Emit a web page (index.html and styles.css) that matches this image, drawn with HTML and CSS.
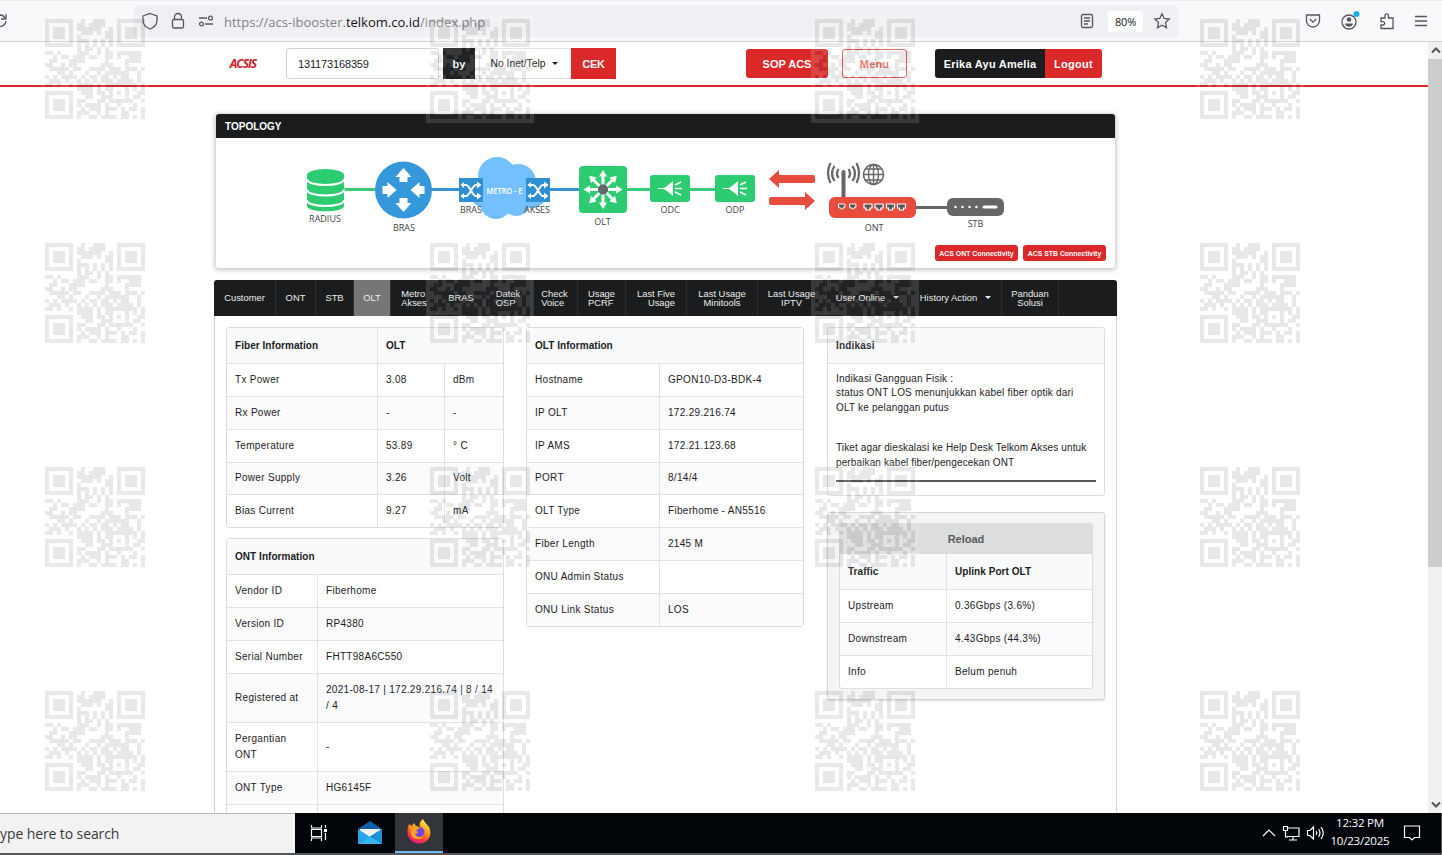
FILE: index.html
```html
<!DOCTYPE html>
<html lang="id">
<head>
    <meta charset="UTF-8">
    <title>ACSIS</title>
    <link rel="stylesheet" href="styles.css">
</head>
<body>
    <div class="browser">
        <svg class="reload" width="8" height="16" viewBox="0 0 8 16"><path d="M-1 13.5C3 14 6 11 5.800 8M6 1v5H1M5 5C4 3 2 2 0 2" /></svg>
        <div class="urlbar">
            <svg width="18" height="18" viewBox="0 0 18 18"><path d="M9 1.500L16 4v4.500C16 12.500 13 15.500 9 17 5 15.500 2 12.500 2 8.500V4z" /></svg>
            <svg width="18" height="18" viewBox="0 0 18 18"><rect x="3.500" y="7.500" width="11" height="8.500" rx="1.500" /><path d="M5.500 7.500V5a3.500 3.500 0 0 1 7 0v2.500" /></svg>
            <svg width="18" height="18" viewBox="0 0 18 18"><path d="M2 6h8M8 12h8" /><circle cx="13.500" cy="6" r="1.900" /><circle cx="4.500" cy="12" r="1.900" /></svg>
            <div class="url">https://acs-ibooster.<b>telkom.co.id</b>/index.php</div>
            <svg class="reader" width="16" height="18" viewBox="0 0 16 18"><rect x="2.500" y="2.500" width="11" height="13" rx="1.500" /><path d="M5 6h6M5 9h6M5 12h4" /></svg>
            <div class="zoom">80%</div>
            <svg width="18" height="18" viewBox="0 0 18 18"><path d="M9 1.800l2.200 4.700 5 .6-3.700 3.500 1 5.100L9 13.200l-4.500 2.500 1-5.100L1.800 7.100l5-.6z" /></svg>
        </div>
        <div class="tools">
            <svg width="18" height="18" viewBox="0 0 18 18"><path d="M2.500 3h13v5.500a6.500 6.500 0 0 1-13 0zM5.800 7L9 10.200 12.200 7" /></svg>
            <svg width="22" height="22" viewBox="0 0 22 22"><circle cx="10" cy="12" r="7" /><circle cx="10" cy="9.500" r="2.300" class="solid" /><path class="solid" d="M6 13.500h8c0 2-2 3.200-4 3.200s-4-1.200-4-3.200z" /><circle cx="17.500" cy="4" r="3" class="dot" /></svg>
            <svg width="18" height="18" viewBox="0 0 18 18"><path d="M3 6h4V3.500a1.700 1.700 0 0 1 3.400 0V6H15v10.500H3V13h2a1.700 1.700 0 0 0 0-3.400H3z" /></svg>
            <svg width="16" height="16" viewBox="0 0 16 16"><path d="M2 3.500h12M2 8h12M2 12.500h12" /></svg>
        </div>
    </div>

    <div class="viewport">
        <div class="page">
            <div class="header">
                <div class="logo">ACSIS</div>
                <div class="search-input">131173168359</div>
                <div class="by">by</div>
                <div class="dropdown">No Inet/Telp <i class="caret"></i></div>
                <div class="cek">CEK</div>
                <div class="sop">SOP ACS</div>
                <div class="menu-btn">Menu</div>
                <div class="user">Erika Ayu Amelia</div>
                <div class="logout">Logout</div>
            </div>

            <div class="topology">
                <div class="topology-title">TOPOLOGY</div>
                <svg class="diagram" width="899" height="105" viewBox="216 138 899 105">
                    <defs>
                        <g id="switch">
                            <rect width="24" height="24" fill="#2f8fd3" />
                            <path d="M3 7h4c4 0 6 11 10 11h3M3 18h4c4 0 6-11 10-11h3" fill="none" stroke="#fff" stroke-width="2" />
                            <path d="M18 3.500l4.500 3.500-4.500 3.500zM18 14.500l4.500 3.500-4.500 3.500zM5 4L1.500 7 5 10zM5 15l-3.500 3 3.500 3z" fill="#fff" />
                        </g>
                        <path id="arrow" d="M-4-8v-5h-4L0-22l8 9H4v5z" />
                        <path id="ray" d="M-1.500-5v-8H-4L0-19.500l4 6.500H1.500v8z" />
                        <g id="splitter">
                            <rect width="40" height="27" rx="3" fill="#2ecc71" />
                            <path d="M8 13h6l3-2 6-5v15l-6-5-3-2H8z" fill="#fff" />
                            <path d="M25 10l6-3M25 13.500h7M25 17l6 3" stroke="#fff" stroke-width="1.500" />
                        </g>
                        <path id="port" d="M0 0h8v4H6v2H2V4H0z" fill="#555" stroke="#fff" stroke-width="1.200" />
                    </defs>
                    <path d="M343 189.500h33" stroke="#3cc878" stroke-width="3" />
                    <path d="M431 189.500h150" stroke="#3793d6" stroke-width="3" />
                    <path d="M626 189.500h90" stroke="#3cc878" stroke-width="3" />

                    <path d="M307 175v31c0 7 37 7 37 0v-31z" fill="#2ecc71" />
                    <ellipse cx="325.500" cy="175" rx="18.500" ry="6" fill="#2ecc71" />
                    <path d="M307 179c0 8 37 8 37 0M307 189.500c0 8 37 8 37 0M307 200c0 8 37 8 37 0" fill="none" stroke="#fff" stroke-width="2" />
                    <text x="325" y="222">RADIUS</text>

                    <circle cx="403.500" cy="190" r="28.500" fill="#3498db" />
                    <g fill="#fff">
                        <use href="#arrow" transform="translate(403.500 190)" />
                        <use href="#arrow" transform="translate(403.500 190) rotate(180)" />
                        <use href="#arrow" transform="translate(403.500 190) rotate(90) translate(0 29)" />
                        <use href="#arrow" transform="translate(403.500 190) rotate(-90) translate(0 29)" />
                    </g>
                    <text x="404" y="231">BRAS</text>

                    <g fill="#74bffd">
                        <circle cx="497" cy="176" r="19" />
                        <circle cx="518" cy="182" r="18" />
                        <circle cx="485" cy="194" r="14" />
                        <circle cx="496" cy="203" r="16" />
                        <circle cx="516" cy="202" r="14" />
                        <circle cx="532" cy="194" r="14" />
                    </g>
                    <use href="#switch" x="459" y="178" />
                    <use href="#switch" x="526" y="178" />
                    <text x="504.500" y="194" class="cloud-text" textLength="36" lengthAdjust="spacingAndGlyphs">METRO - E</text>
                    <text x="471" y="213">BRAS</text>
                    <text x="537" y="213">AKSES</text>

                    <rect x="579" y="166" width="48" height="47" rx="4" fill="#2ecc71" />
                    <g fill="#fff" transform="translate(603 189.500)">
                        <use href="#ray" /><use href="#ray" transform="rotate(45)" />
                        <use href="#ray" transform="rotate(90)" /><use href="#ray" transform="rotate(135)" />
                        <use href="#ray" transform="rotate(180)" /><use href="#ray" transform="rotate(225)" />
                        <use href="#ray" transform="rotate(270)" /><use href="#ray" transform="rotate(315)" />
                    </g>
                    <circle cx="603" cy="189.500" r="5" fill="#666" />
                    <text x="602.500" y="225">OLT</text>

                    <use href="#splitter" x="650" y="175" />
                    <text x="670" y="213">ODC</text>
                    <use href="#splitter" x="715" y="175" />
                    <text x="735" y="213">ODP</text>

                    <path d="M769 179l10-9v5h34q2 0 2 2v4q0 2-2 2h-34v5zM815 201l-10-9v5h-34q-2 0-2 2v4q0 2 2 2h34v5z" fill="#e74c3c" />

                    <path d="M843.500 198v-26" stroke="#666" stroke-width="4" stroke-linecap="round" />
                    <g fill="none" stroke="#666" stroke-width="2.200">
                        <path d="M838.500 169q-3 4.500 0 9M834.500 166q-5 7.500 0 15M830.500 163q-5 10 0 20M848.500 169q3 4.500 0 9M852.500 166q5 7.500 0 15M856.500 163q5 10 0 20" />
                        <g stroke-width="1.400">
                            <circle cx="873.500" cy="174.500" r="10" />
                            <ellipse cx="873.500" cy="174.500" rx="5" ry="10" />
                            <path d="M873.500 164.500v20M863.500 174.500h20M865.500 169h16M865.500 180h16" />
                        </g>
                    </g>
                    <path d="M915 207.500h33" stroke="#666" stroke-width="3" />
                    <rect x="829" y="197" width="87" height="21" rx="6" fill="#e74c3c" />
                    <use href="#port" transform="translate(838.500 204) scale(.8)" />
                    <use href="#port" transform="translate(849.500 204) scale(.8)" />
                    <use href="#port" x="864" y="204" />
                    <use href="#port" x="875" y="204" />
                    <use href="#port" x="886.500" y="204" />
                    <use href="#port" x="897.500" y="204" />
                    <text x="874" y="231">ONT</text>

                    <rect x="947" y="198" width="57" height="18" rx="6" fill="#666" />
                    <g fill="#fff">
                        <circle cx="955.500" cy="207" r="1.300" /><circle cx="962.500" cy="207" r="1.300" />
                        <circle cx="969.500" cy="207" r="1.300" /><circle cx="976.500" cy="207" r="1.300" />
                        <rect x="982.500" y="205.500" width="15" height="3" rx="1.500" />
                    </g>
                    <text x="975.500" y="227">STB</text>
                </svg>
                <div class="connectivity">
                    <span>ACS ONT Connectivity</span>
                    <span>ACS STB Connectivity</span>
                </div>
            </div>

            <div class="nav">
                <div>Customer</div>
                <div>ONT</div>
                <div>STB</div>
                <div class="active">OLT</div>
                <div class="left">Metro<br>Akses</div>
                <div>BRAS</div>
                <div class="left">Datek<br>OSP</div>
                <div class="left">Check<br>Voice</div>
                <div class="left">Usage<br>PCRF</div>
                <div class="right">Last Five<br>Usage</div>
                <div>Last Usage<br>Minitools</div>
                <div>Last Usage<br>IPTV</div>
                <div>User Online <i class="caret"></i></div>
                <div>History Action <i class="caret"></i></div>
                <div>Panduan<br>Solusi</div>
            </div>

            <div class="content">
                <div class="col">
                    <table>
                        <tr><th class="w-fiber">Fiber Information</th><th colspan="2">OLT</th></tr>
                        <tr><td>Tx Power</td><td class="w-value">3.08</td><td>dBm</td></tr>
                        <tr><td>Rx Power</td><td>-</td><td>-</td></tr>
                        <tr><td>Temperature</td><td>53.89</td><td>° C</td></tr>
                        <tr><td>Power Supply</td><td>3.26</td><td>Volt</td></tr>
                        <tr><td>Bias Current</td><td>9.27</td><td>mA</td></tr>
                    </table>
                    <table>
                        <tr><th colspan="2">ONT Information</th></tr>
                        <tr><td class="w-ont">Vendor ID</td><td>Fiberhome</td></tr>
                        <tr><td>Version ID</td><td>RP4380</td></tr>
                        <tr><td>Serial Number</td><td>FHTT98A6C550</td></tr>
                        <tr class="double"><td>Registered at</td><td>2021-08-17 | 172.29.216.74 | 8 / 14<br>/ 4</td></tr>
                        <tr class="double"><td>Pergantian<br>ONT</td><td>-</td></tr>
                        <tr><td>ONT Type</td><td>HG6145F</td></tr>
                        <tr><td></td><td></td></tr>
                    </table>
                </div>
                <div class="col">
                    <table>
                        <tr><th colspan="2">OLT Information</th></tr>
                        <tr><td class="w-olt">Hostname</td><td>GPON10-D3-BDK-4</td></tr>
                        <tr><td>IP OLT</td><td>172.29.216.74</td></tr>
                        <tr><td>IP AMS</td><td>172.21.123.68</td></tr>
                        <tr><td>PORT</td><td>8/14/4</td></tr>
                        <tr><td>OLT Type</td><td>Fiberhome - AN5516</td></tr>
                        <tr><td>Fiber Length</td><td>2145 M</td></tr>
                        <tr><td>ONU Admin Status</td><td></td></tr>
                        <tr><td>ONU Link Status</td><td>LOS</td></tr>
                    </table>
                </div>
                <div class="col">
                    <div class="indikasi">
                        <div class="indikasi-title">Indikasi</div>
                        <div class="indikasi-body">
                            <p>Indikasi Gangguan Fisik :<br>status ONT LOS menunjukkan kabel fiber optik dari<br>OLT ke pelanggan putus</p>
                            <p>Tiket agar dieskalasi ke Help Desk Telkom Akses untuk<br>perbaikan kabel fiber/pengecekan ONT</p>
                            <hr>
                        </div>
                    </div>
                    <div class="segment">
                        <div class="reload-btn">Reload</div>
                        <table>
                            <tr><th class="w-traffic">Traffic</th><th>Uplink Port OLT</th></tr>
                            <tr><td>Upstream</td><td>0.36Gbps (3.6%)</td></tr>
                            <tr><td>Downstream</td><td>4.43Gbps (44.3%)</td></tr>
                            <tr><td>Info</td><td>Belum penuh</td></tr>
                        </table>
                    </div>
                </div>
            </div>
        </div>
        <div class="scrollbar">
            <svg width="14" height="17" viewBox="0 0 14 17"><path d="M4 10.500l4-4 4 4" /></svg>
            <div class="thumb"></div>
            <svg width="14" height="17" viewBox="0 0 14 17"><path d="M4 6.500l4 4 4-4" /></svg>
        </div>
    </div>

    <div class="taskbar">
        <div class="task-search">ype here to search</div>
        <div class="task-icon">
            <svg width="18" height="18" viewBox="0 0 18 18"><path d="M1.500 1v3h10V1M1.500 17v-3h10v3M1.500 5.500h10v7h-10zM15.500 1v3M15.500 9v7" fill="none" stroke="#fff" stroke-width="1.200" /><rect x="14" y="5" width="3" height="3" fill="#fff" /></svg>
        </div>
        <div class="task-icon mail">
            <svg width="26" height="24" viewBox="0 0 26 24"><path d="M1 8L13 0l12 8v2H1z" fill="#0f5fae" /><path d="M3 8h20v8H3z" fill="#f4f4f4" /><path d="M1 8l12 8-12 7z" fill="#2aa7e8" /><path d="M25 8v15H1z" fill="#35b8f1" /><path d="M13 15.500L25 8v15z" fill="#1c8fdc" /></svg>
        </div>
        <div class="task-icon firefox">
            <svg width="26" height="26" viewBox="0 0 26 26">
                <defs>
                    <linearGradient id="flame" x1=".8" y1="0" x2=".3" y2="1"><stop offset="0" stop-color="#fff44f" /><stop offset=".45" stop-color="#ff980e" /><stop offset=".75" stop-color="#ff3647" /><stop offset="1" stop-color="#e31587" /></linearGradient>
                </defs>
                <path d="M3 5l2.500 2L8 4l2 3 4 1c-1-3 0-6 3-8 1 3 4 5 6 8 2 4 2 9-1 12.500S14 25 10 24 1.500 19 1.500 14 2 8 3 5z" fill="url(#flame)" />
                <circle cx="13.500" cy="13" r="5" fill="#7542e5" />
                <path d="M4 8c4-2 8-1 10 2-3 0-4 1-4 2 3 0 2 3-1 3 1 3 5 4 9 2-3 5-12 4-13-2z" fill="#ffa01e" />
            </svg>
        </div>
        <div class="tray">
            <svg width="14" height="18" viewBox="0 0 14 18"><path d="M1 12l6-6 6 6" /></svg>
            <svg width="18" height="18" viewBox="0 0 18 18"><path d="M5 4h12v8.500H5M11 12.500V16M7 16h8M1.500 2.500h4v4h-4zM3.500 6.500V13H6" /></svg>
            <svg width="18" height="18" viewBox="0 0 18 18"><path d="M1.500 6.500h2.500L7.500 3v12L4 11.500H1.500zM10 7q1.500 2 0 4M12.500 5q3 4 0 8M15 3.200q4.500 5.800 0 11.600" /></svg>
            <div class="clock">12:32 PM<br>10/23/2025</div>
            <svg width="18" height="18" viewBox="0 0 18 18"><path d="M1.500 2h15v11.500h-5L9 16l-2.500-2.500h-5z" /></svg>
        </div>
    </div>

    <div class="watermark"></div>

    <script>
        const rows = [
            "1111111..1..111...1111111",
            "1.....1.11.1111...1.....1",
            "1.111.1.111111..1.1.111.1",
            "1.111.1..111.1.11.1.111.1",
            "1.111.1.1......11.1.111.1",
            "1.....1.111.1.1.1.1.....1",
            "1111111.1.1.1.1.1.1111111",
            "........1.11.1.1.........",
            "11.1....111..1.11.111111.",
            "..1.11.111.11..11.1..111.",
            ".11...1111.....1....1111.",
            "11..1.11......111...1....",
            ".11111.11..1111.111.111.1",
            "...11.1...1..1.111111..1.",
            "1.1.1111.1.11.11.1.11..1.",
            ".111.1..1.1.1.111.1111.1.",
            "11.1..1.1111.1.11111111.1",
            "........1111.1.11...1.1.1",
            "1111111..111.11.1.1.1..11",
            "1.....1...11..111...1.11.",
            "1.111.1.11...11.111111..1",
            "1.111.1.1.1111.1..1...1..",
            "1.111.1..1.111.111.1.11.1",
            "1.....1.111..1.1...11...1",
            "1111111.1..11.1111.11.1.1"
        ];
        let dark = '', light = '';
        for (let y = -1; y < 26; y++) {
            for (let x = -1; x < 26; x++) {
                const cell = `M${x} ${y}h1v1h-1z`;
                if (rows[y] && rows[y][x] === '1') dark += cell;
                else light += cell;
            }
        }
        const code = `<svg viewBox="-1 -1 27 27"><path class="qr-light" d="${light}"/><path class="qr-dark" d="${dark}"/></svg>`;
        document.querySelector('.watermark').innerHTML = code.repeat(16);
    </script>
</body>
</html>
```
FILE: styles.css
```css
* {
    box-sizing: border-box;
}
body {
    margin: 0;
    width: 1442px;
    height: 855px;
    overflow: hidden;
    display: flex;
    flex-direction: column;
    font-family: "Liberation Sans", Arial, sans-serif;
    font-size: 10px;
    color: #1b1c1d;
    background-color: #fff;
}

/* browser bar */
.browser {
    height: 42px;
    flex: none;
    display: flex;
    align-items: center;
    background-color: #f9f9fb;
    border-top: 1px solid #ededf0;
    border-bottom: 1px solid #cfcfd3;
}
.browser svg {
    fill: none;
    stroke: #55555f;
    stroke-width: 1.3;
    flex: none;
}
.browser .solid { fill: #55555f; stroke: none; }
.browser .dot { fill: #14b1ee; stroke: none; }
.reload { width: 8px; }
.urlbar {
    margin-left: 126px;
    width: 1044px;
    height: 32px;
    border-radius: 4px;
    background-color: #f0f0f4;
    display: flex;
    align-items: center;
    gap: 10px;
    padding: 0 7px;
}
.url {
    flex: 1;
    margin: 2px 0 0 -1px;
    font-family: "Open Sans", sans-serif;
    font-size: 13px;
    color: #808087;
    white-space: nowrap;
}
.url b { font-weight: normal; color: #15141a; }
.urlbar .reader { margin-right: 3px; }
.zoom {
    width: 35px;
    height: 21px;
    line-height: 21px;
    border-radius: 3px;
    background-color: #fff;
    text-align: center;
    font-family: "Open Sans", sans-serif;
    font-size: 11px;
    letter-spacing: -0.2px;
    color: #15141a;
}
.tools {
    margin-left: auto;
    padding-right: 13px;
    display: flex;
    align-items: center;
    gap: 17px;
}

/* page */
.viewport {
    height: 771px;
    flex: none;
    display: flex;
    overflow: hidden;
}
.page {
    width: 1428px;
    height: 771px;
    overflow: hidden;
}
.scrollbar {
    width: 14px;
    background-color: #f0f0f0;
    display: flex;
    flex-direction: column;
}
.scrollbar svg { fill: none; stroke: #555; stroke-width: 2; }
.thumb {
    height: 508px;
    margin-bottom: auto;
    background-color: #cdcdcd;
}
.header {
    height: 45px;
    padding-left: 229px;
    display: flex;
    align-items: center;
    border-bottom: 2px solid #db2828;
}
.header > div {
    height: 29px;
    display: flex;
    align-items: center;
    justify-content: center;
    font-size: 11px;
    font-weight: bold;
    letter-spacing: 0.15px;
    white-space: nowrap;
}
.header .logo {
    width: 28px;
    margin-right: 29px;
    font-family: "Open Sans", sans-serif;
    font-size: 12px;
    font-style: italic;
    letter-spacing: -1px;
    color: #d0202c;
}
.header .search-input {
    width: 153px;
    height: 31px;
    justify-content: flex-start;
    padding-left: 11px;
    font-weight: normal;
    letter-spacing: -0.15px;
    border: 1px solid #d0d0d2;
    border-radius: 3px;
}
.header .by {
    width: 32px;
    height: 31px;
    margin: 0 4px;
    color: #fff;
    background-color: #1b1c1d;
}
.header .dropdown {
    width: 92px;
    height: 31px;
    gap: 7px;
    padding-right: 2px;
    font-size: 10.3px;
    font-weight: normal;
    letter-spacing: 0;
    border: 1px solid #e0e0e2;
    border-right: none;
}
.caret {
    display: inline-block;
    border: 3px solid transparent;
    border-top-color: currentColor;
    border-bottom: none;
}
.header .cek {
    width: 45px;
    height: 31px;
    letter-spacing: -0.3px;
    color: #fff;
    background-color: #db2828;
}
.header .sop {
    width: 82px;
    margin-left: 130px;
    letter-spacing: 0;
    color: #fff;
    background-color: #db2828;
    border-radius: 3px;
}
.header .menu-btn {
    width: 65px;
    margin: 0 28px 0 14px;
    color: #ea6a5e;
    border: 1px solid #e0554d;
    border-radius: 3px;
}
.header .user {
    width: 110px;
    letter-spacing: 0.25px;
    color: #fff;
    background-color: #1b1c1d;
    border-radius: 3px 0 0 3px;
}
.header .logout {
    width: 57px;
    letter-spacing: 0.25px;
    color: #fff;
    background-color: #db2828;
    border-radius: 0 3px 3px 0;
}

.topology {
    width: 899px;
    height: 154px;
    margin: 27px 0 0 216px;
    background-color: #fff;
    border-radius: 3px;
    box-shadow: 0 1px 5px 1px rgba(34, 36, 38, 0.28);
}
.topology-title {
    height: 24px;
    line-height: 25px;
    padding-left: 9px;
    color: #fff;
    font-weight: bold;
    background-color: #1b1c1d;
    border-radius: 3px 3px 0 0;
}
.diagram {
    display: block;
    font-family: "Open Sans", sans-serif;
    font-size: 9px;
    fill: #444;
    text-anchor: middle;
}
.cloud-text { fill: #fff; font-size: 9.5px; font-weight: 600; }
.connectivity {
    display: flex;
    justify-content: flex-end;
    gap: 5px;
    padding: 2px 9px 0 0;
}
.connectivity span {
    width: 83px;
    height: 16px;
    line-height: 17px;
    text-align: center;
    color: #fff;
    font-size: 6.9px;
    font-weight: bold;
    background-color: #db2828;
    border-radius: 3px;
}

.nav {
    width: 903px;
    height: 36px;
    margin: 12px 0 0 214px;
    display: grid;
    grid-template-columns: 62px 40px 38px 37px 47px 47px 47px 46px 48px 61px 71px 68px 84px 92px 57px;
    color: #ececec;
    font-size: 9.4px;
    line-height: 9px;
    background-color: #1b1c1d;
    border-radius: 3px 3px 0 0;
}
.nav div {
    display: flex;
    align-items: center;
    justify-content: center;
    text-align: center;
    white-space: nowrap;
    padding-bottom: 1px;
    border-right: 1px solid #2b2c2d;
}
.nav .left { text-align: left; }
.nav .right { text-align: right; }
.nav .active { background-color: #767676; }
.nav .caret { margin-left: 8px; }

.content {
    width: 903px;
    height: 520px;
    margin-left: 214px;
    padding: 11px 11px 0;
    display: flex;
    justify-content: space-between;
    border: 1px solid #d4d4d5;
    border-top: none;
}
.col { width: 278px; flex: none; }
.col:nth-child(2) { margin-left: -1px; }

table {
    width: 100%;
    margin-bottom: 10px;
    border: 1px solid #dcdcde;
    border-radius: 3px;
    border-spacing: 0;
    letter-spacing: 0.3px;
}
th, td {
    height: 32.85px;
    padding: 0 8px;
    text-align: left;
    line-height: 16px;
    white-space: nowrap;
    border-left: 1px solid #e2e2e4;
    border-top: 1px solid #e2e2e4;
}
th {
    height: 35px;
    border-top: none;
    letter-spacing: 0.05px;
    background-color: #f9fafb;
}
th:first-child, td:first-child { border-left: none; }
tr:nth-child(odd) td { background-color: #fbfafc; }
.double td { height: 49px; }
.w-fiber { width: 150px; }
.w-value { width: 67px; }
.w-ont { width: 90px; }
.w-olt { width: 132px; }
.w-traffic { width: 106px; }

.indikasi {
    height: 169px;
    border: 1px solid #dcdcde;
    border-radius: 3px;
    letter-spacing: 0.2px;
}
.indikasi-title {
    height: 36px;
    line-height: 36px;
    padding-left: 8px;
    font-weight: bold;
    background-color: #f9fafb;
    border-bottom: 1px solid #e2e2e4;
}
.indikasi-body { padding: 8px; line-height: 14.3px; }
.indikasi-body p {
    margin: 0 0 26.5px;
    white-space: nowrap;
}
.indikasi-body p + p { letter-spacing: 0.12px; }
.indikasi-body hr {
    margin: -16px 0 0;
    border: none;
    height: 2px;
    background-color: #555;
}
.segment {
    height: 188px;
    margin-top: 16px;
    padding: 10px 11px 0;
    background-color: #f3f4f5;
    border: 1px solid #d4d4d5;
    border-radius: 3px;
    box-shadow: 0 1px 2px rgba(34, 36, 38, 0.15);
}
.reload-btn {
    height: 31px;
    line-height: 32px;
    text-align: center;
    font-size: 11px;
    font-weight: bold;
    color: #5a5a5a;
    background-color: #dcddde;
    border-radius: 3px 3px 0 0;
}
.segment table {
    margin-top: -1px;
    background-color: #fff;
}

/* taskbar */
.taskbar {
    height: 42px;
    flex: none;
    display: flex;
    align-items: stretch;
    background-color: #010409;
    border-bottom: 2px solid #55565a;
    color: #fff;
    font-family: "Open Sans", sans-serif;
}
.task-search {
    width: 295px;
    line-height: 39px;
    font-size: 14px;
    letter-spacing: -0.1px;
    color: #3a3a3a;
    background-color: #f3f2f2;
    border-top: 1px solid #b9b9b9;
}
.task-icon {
    width: 48px;
    display: flex;
    align-items: center;
    justify-content: center;
}
.task-icon.mail { width: 52px; padding-left: 2px; }
.task-icon.firefox { background-color: #33353a; border-bottom: 2px solid #76b9ed; }
.tray {
    margin-left: auto;
    padding-right: 20px;
    display: flex;
    align-items: center;
    gap: 6px;
    border-right: 1px solid #555;
}
.tray svg { fill: none; stroke: #fff; stroke-width: 1.2; }
.clock {
    width: 60px;
    margin-top: -2px;
    text-align: center;
    font-size: 11.6px;
    line-height: 18px;
    letter-spacing: -0.25px;
    white-space: nowrap;
}
.clock + svg { margin-left: 7px; }

/* repeated code laid over the whole screen */
.watermark {
    position: absolute;
    left: 41px;
    top: 15px;
    display: grid;
    grid-template-columns: repeat(4, 108px);
    column-gap: 277px;
    row-gap: 116px;
    pointer-events: none;
}
.watermark svg {
    display: block;
    width: 108px;
    height: 108px;
    shape-rendering: crispEdges;
}
.qr-light { fill: rgba(255, 255, 255, 0.13); }
.qr-dark { fill: rgba(78, 78, 78, 0.13); }
```
